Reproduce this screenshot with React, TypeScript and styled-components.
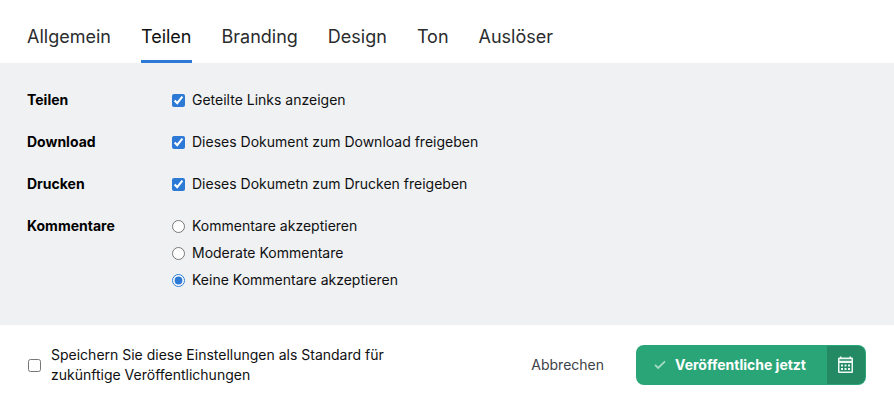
import React, { useState } from "react";
import styled, { createGlobalStyle } from "styled-components";

const GlobalStyle = createGlobalStyle`
  * { box-sizing: border-box; }
  body {
    margin: 0;
    background: #fff;
    color: #0f1011;
    font-family: Inter, "Liberation Sans", sans-serif;
    font-size: 14px;
    line-height: 20px;
  }
  button { font: inherit; border: 0; padding: 0; background: none; cursor: pointer; }
`;

const Tabs = styled.nav`
  display: flex;
  gap: 30px;
  padding: 20px 27px 0;
`;

const Tab = styled.button<{ $active: boolean }>`
  && {
    height: 43px;
    padding-bottom: 7px;
    font-size: 18px;
    line-height: 30px;
    color: ${(p) => (p.$active ? "#0f1011" : "#2a2c2e")};
    border-bottom: 3px solid ${(p) => (p.$active ? "#2d7ad6" : "transparent")};
  }
`;

const Panel = styled.main`
  display: grid;
  gap: 22px;
  padding: 27px 27px 35px;
  background: #f0f1f3;
`;

const Group = styled.fieldset`
  display: grid;
  grid-template-columns: 145px 1fr;
  margin: 0;
  padding: 0;
  border: 0;
  min-width: 0;
`;

const GroupTitle = styled.div`
  font-weight: 700;
  color: #000;
`;

const Options = styled.div`
  display: grid;
  gap: 7px;
  justify-items: start;
`;

const Choice = styled.label<{ $gap?: number }>`
  display: flex;
  align-items: center;
  gap: ${(p) => p.$gap ?? 7}px;
`;

const Toggle = styled.input`
  flex: none;
  width: 13px;
  height: 13px;
  margin: 0;
  accent-color: #2d7ad6;
`;

const Footer = styled.footer`
  display: flex;
  align-items: center;
  justify-content: space-between;
  gap: 32px;
  padding: 20px 28px;
`;

const DefaultText = styled.span`
  max-width: 360px;
`;

const Actions = styled.div`
  display: flex;
  align-items: center;
  gap: 32px;
`;

const Cancel = styled.button`
  && { color: #3d4247; }
`;

const Split = styled.div`
  display: flex;
  height: 40px;
  padding: 1px;
  border-radius: 8px;
  background: #2aa577;
`;

const Publish = styled.button`
  && {
    display: flex;
    align-items: center;
    gap: 9px;
    padding: 0 21px 0 17px;
    color: #fff;
    font-weight: 700;
    white-space: nowrap;
  }
`;

const Schedule = styled.button`
  && {
    display: grid;
    place-items: center;
    width: 38px;
    background: #238a64;
    border-radius: 0 7px 7px 0;
  }
`;

const CheckIcon = () => (
  <svg width="12" height="10" viewBox="0 0 12 10" fill="none" aria-hidden="true">
    <path d="M1 4.8 4.2 8 11 1.4" stroke="#a6dbc6" strokeWidth="1.8" />
  </svg>
);

const CalendarIcon = () => (
  <svg width="16" height="18" viewBox="0 0 16 18" aria-hidden="true">
    <path
      fill="#eef8f3"
      fillRule="evenodd"
      d="M2 0.500h1.500V1.500h8V0.500H13V1.500h1A1 1 0 0 1 15 2.500v13.500a1 1 0 0 1-1 1H1a1 1 0 0 1-1-1v-13.500A1 1 0 0 1 1 1.500h1zM1.500 3.300v1.400h12V3.300zM1.500 7v8.500h12V7z"
    />
    <path
      fill="#eef8f3"
      d="M3 8.500h2v2H3zM6.500 8.500h2v2h-2zM10 8.500h2v2h-2zM3 12h2v2H3zM6.500 12h2v2h-2zM10 12h2v2h-2z"
    />
  </svg>
);

const tabs = ["Allgemein", "Teilen", "Branding", "Design", "Ton", "Auslöser"];

const switches = [
  { title: "Teilen", label: "Geteilte Links anzeigen" },
  { title: "Download", label: "Dieses Dokument zum Download freigeben" },
  { title: "Drucken", label: "Dieses Dokumetn zum Drucken freigeben" },
];

const comments = [
  "Kommentare akzeptieren",
  "Moderate Kommentare",
  "Keine Kommentare akzeptieren",
];

export default function App() {
  const [tab, setTab] = useState("Teilen");
  return (
    <>
      <GlobalStyle />
      <Tabs>
        {tabs.map((name) => (
          <Tab key={name} type="button" $active={name === tab} onClick={() => setTab(name)}>
            {name}
          </Tab>
        ))}
      </Tabs>
      <Panel>
        {switches.map((s) => (
          <Group key={s.title} aria-label={s.title}>
            <GroupTitle>{s.title}</GroupTitle>
            <Options>
              <Choice>
                <Toggle type="checkbox" defaultChecked />
                {s.label}
              </Choice>
            </Options>
          </Group>
        ))}
        <Group aria-label="Kommentare">
          <GroupTitle>Kommentare</GroupTitle>
          <Options>
            {comments.map((label, i) => (
              <Choice key={label}>
                <Toggle type="radio" name="comments" defaultChecked={i === 2} />
                {label}
              </Choice>
            ))}
          </Options>
        </Group>
      </Panel>
      <Footer>
        <Choice $gap={10}>
          <Toggle type="checkbox" />
          <DefaultText>
            Speichern Sie diese Einstellungen als Standard für zukünftige Veröffentlichungen
          </DefaultText>
        </Choice>
        <Actions>
          <Cancel type="button">Abbrechen</Cancel>
          <Split>
            <Publish type="button">
              <CheckIcon />
              Veröffentliche jetzt
            </Publish>
            <Schedule type="button" aria-label="Veröffentlichung planen">
              <CalendarIcon />
            </Schedule>
          </Split>
        </Actions>
      </Footer>
    </>
  );
}
